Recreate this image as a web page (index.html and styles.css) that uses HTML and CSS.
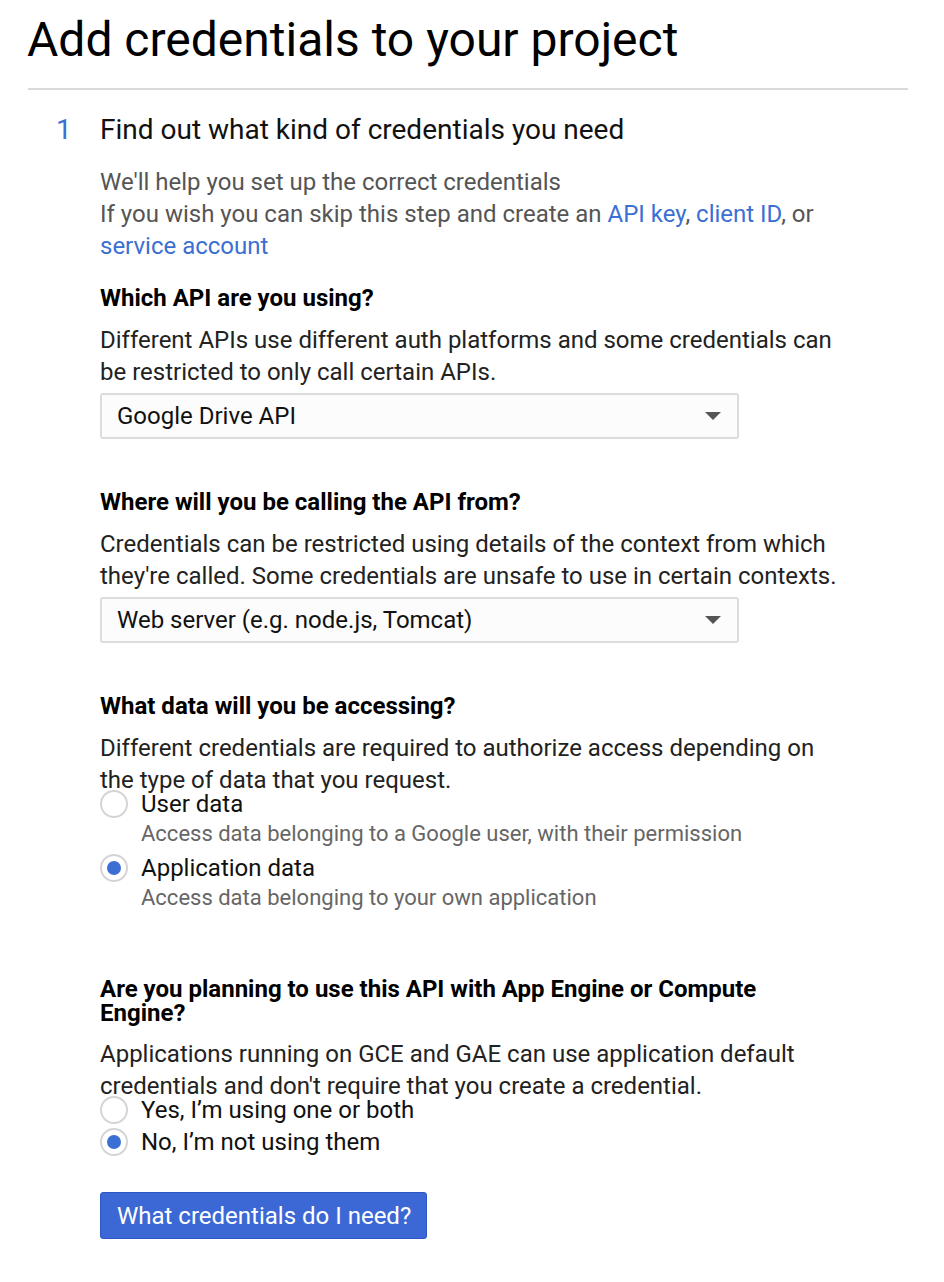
FILE: index.html
```html
<!DOCTYPE html>
<html>
<head>
<meta charset="utf-8">
<link rel="stylesheet" href="styles.css">
</head>
<body>
<div class="page">
  <h1 class="title">Add credentials to your project</h1>
  <div class="divider"></div>
  <div class="step">
    <div class="step-num">1</div>
    <div class="step-body">
      <h2 class="step-title">Find out what kind of credentials you need</h2>
      <p class="intro">We'll help you set up the correct credentials<br>If you wish you can skip this step and create an <a href="#">API key</a>, <a href="#">client ID</a>, or <a href="#">service account</a></p>

      <section class="q">
        <h3 class="q-title">Which API are you using?</h3>
        <p class="q-desc">Different APIs use different auth platforms and some credentials can be restricted to only call certain APIs.</p>
        <div class="select"><span>Google Drive API</span><span class="caret"></span></div>
      </section>

      <section class="q">
        <h3 class="q-title">Where will you be calling the API from?</h3>
        <p class="q-desc">Credentials can be restricted using details of the context from which they're called. Some credentials are unsafe to use in certain contexts.</p>
        <div class="select"><span>Web server (e.g. node.js, Tomcat)</span><span class="caret"></span></div>
      </section>

      <section class="q">
        <h3 class="q-title">What data will you be accessing?</h3>
        <p class="q-desc">Different credentials are required to authorize access depending on the type of data that you request.</p>
        <div class="radios">
          <div class="radio">
            <span class="dot"></span>
            <div><div class="r-label">User data</div><div class="r-sub">Access data belonging to a Google user, with their permission</div></div>
          </div>
          <div class="radio">
            <span class="dot on"></span>
            <div><div class="r-label">Application data</div><div class="r-sub">Access data belonging to your own application</div></div>
          </div>
        </div>
      </section>

      <section class="q q-last">
        <h3 class="q-title tight">Are you planning to use this API with App Engine or Compute Engine?</h3>
        <p class="q-desc">Applications running on GCE and GAE can use application default credentials and don't require that you create a credential.</p>
        <div class="radios">
          <div class="radio"><span class="dot"></span><div class="r-label">Yes, I’m using one or both</div></div>
          <div class="radio"><span class="dot on"></span><div class="r-label">No, I’m not using them</div></div>
        </div>
      </section>

      <button class="btn">What credentials do I need?</button>
    </div>
  </div>
</div>
</body>
</html>
```

FILE: styles.css
```css
html, body {
  margin: 0;
  padding: 0;
  background: #fff;
}
body {
  font-family: Roboto, "Liberation Sans", sans-serif;
  color: #212121;
}
.page {
  padding: 0 36px 0 27px;
}
.title {
  margin: 0;
  padding-top: 12px;
  font-size: 48px;
  font-weight: 400;
  line-height: 56px;
  color: #000;
}
.divider {
  margin: 20px 0 0 1px;
  height: 2px;
  background: #dadada;
}
.step {
  display: flex;
  margin-top: 20px;
}
.step-num {
  width: 73px;
  padding-left: 29px;
  box-sizing: border-box;
  font-size: 28px;
  line-height: 40px;
  color: #3b6fd4;
}
.step-body {
  flex: 1;
}
.step-title {
  margin: 0;
  font-size: 28px;
  font-weight: 400;
  line-height: 40px;
  color: #111;
}
.intro {
  margin: 16px 0 0;
  font-size: 24px;
  line-height: 32px;
  color: #555;
  max-width: 745px;
}
a {
  color: #3b6fd4;
  text-decoration: none;
}
.q {
  margin-top: 20px;
  max-width: 745px;
}
.q + .q {
  margin-top: 47px;
}
.q-title {
  margin: 0;
  font-size: 24px;
  font-weight: 700;
  line-height: 32px;
  color: #000;
}
.q-title.tight {
  line-height: 24px;
  margin-bottom: 13px;
}
.q-desc {
  margin: 10px 0 0;
  font-size: 24px;
  line-height: 32px;
  color: #222;
}
.select {
  margin-top: 5px;
  width: 639px;
  height: 46px;
  box-sizing: border-box;
  border: 2px solid #dcdcdc;
  border-radius: 3px;
  background: #fcfcfc;
  display: flex;
  align-items: center;
  justify-content: space-between;
  padding: 0 16px 0 15px;
  font-size: 24px;
  color: #111;
}
.caret {
  width: 0;
  height: 0;
  border-left: 8px solid transparent;
  border-right: 8px solid transparent;
  border-top: 8px solid #555;
}
.radios {
  display: flex;
  flex-direction: column;
  gap: 4px;
  margin-top: -6px;
}
.radio {
  display: flex;
  align-items: flex-start;
  gap: 13px;
}
.dot {
  flex: none;
  width: 28px;
  height: 28px;
  box-sizing: border-box;
  border: 2px solid #d5d5d5;
  border-radius: 50%;
  background: #fff;
  position: relative;
}
.dot.on::after {
  content: "";
  position: absolute;
  left: 5px;
  top: 5px;
  width: 14px;
  height: 14px;
  border-radius: 50%;
  background: #3b6fd4;
}
.r-label {
  font-size: 24px;
  line-height: 28px;
  color: #111;
}
.r-sub {
  font-size: 22px;
  line-height: 32px;
  color: #666;
}
.q-last {
  margin-top: 63px !important;
}
.btn {
  display: block;
  margin-top: 36px;
  height: 47px;
  padding: 0 15px 0 16px;
  border: 1px solid #2a56c6;
  border-radius: 3px;
  background: #3b68d4;
  color: #fff;
  font-family: Roboto, "Liberation Sans", sans-serif;
  font-size: 24px;
  cursor: pointer;
}
```
